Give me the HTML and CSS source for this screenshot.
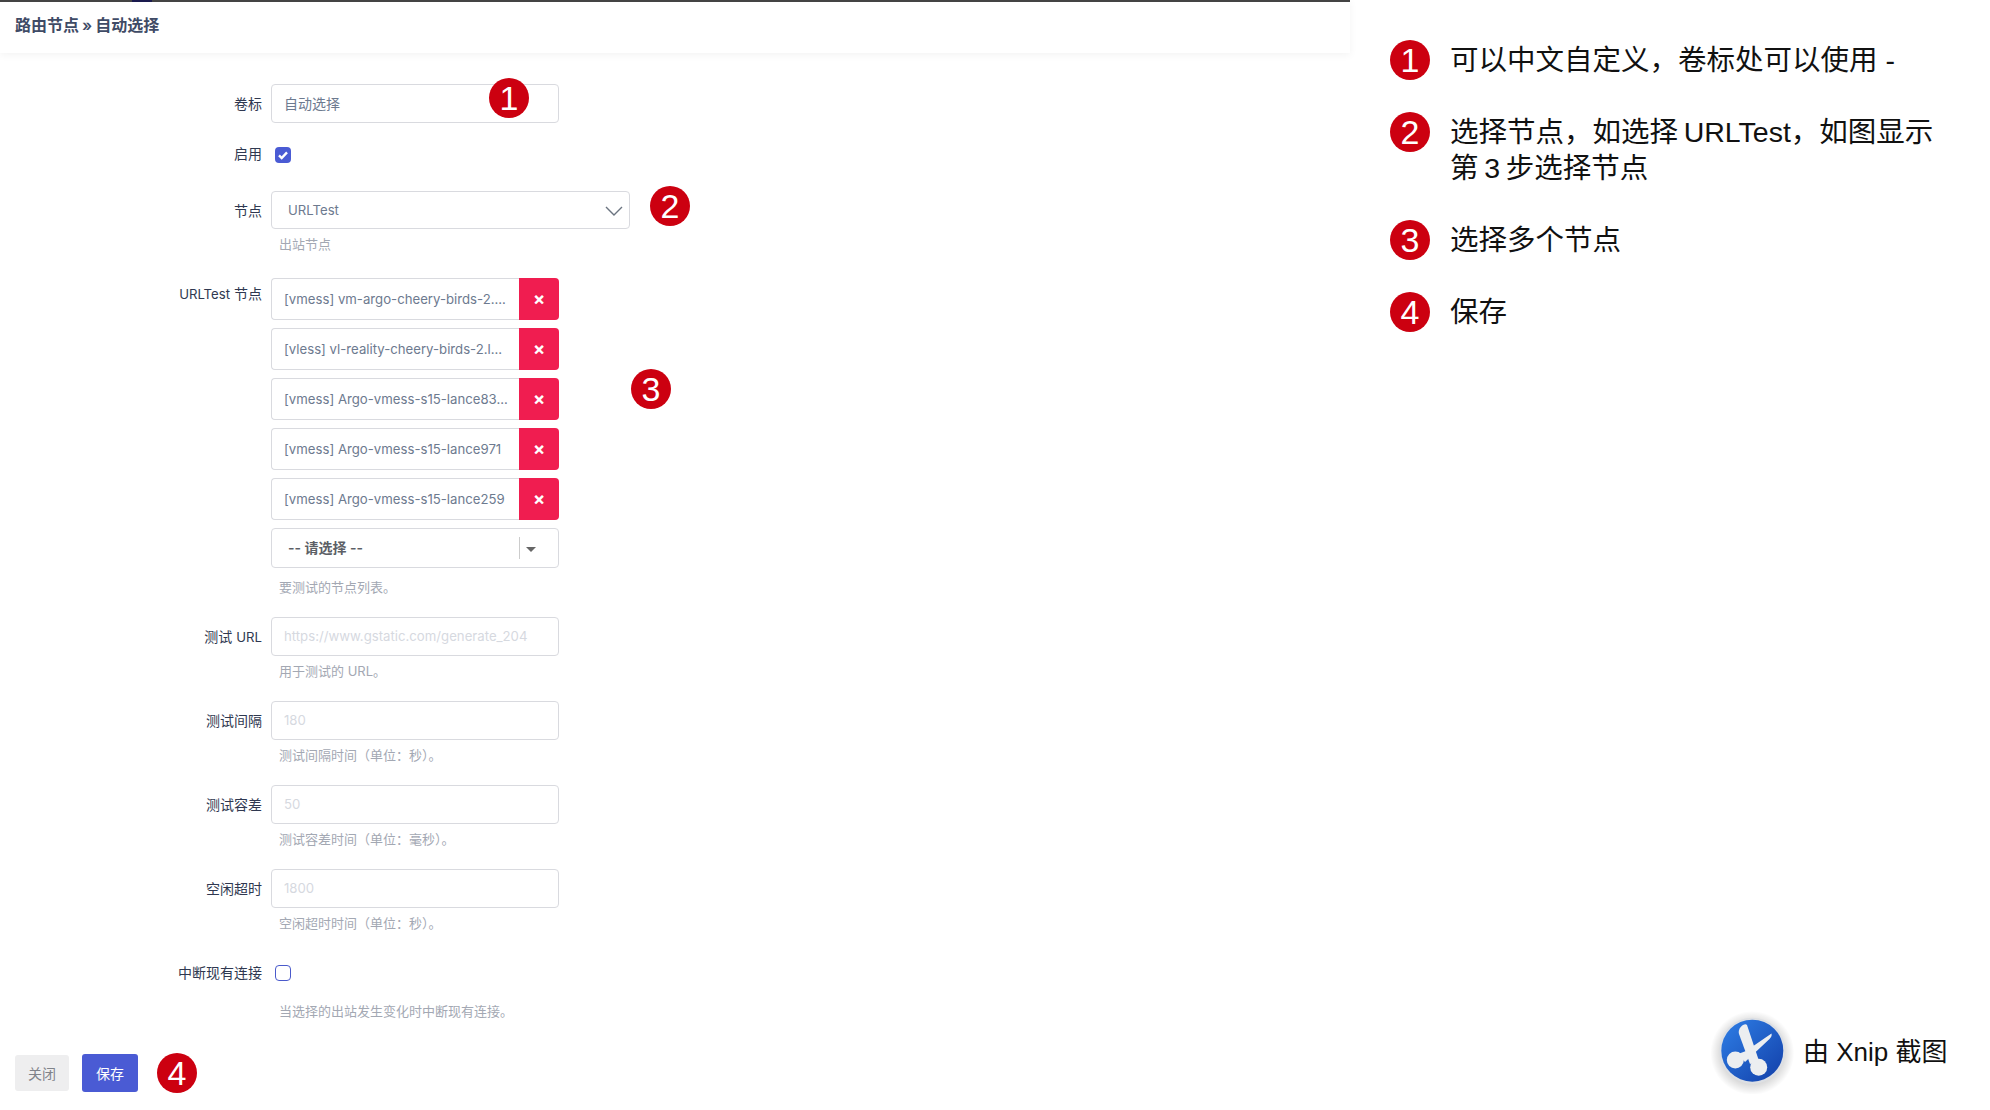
FILE: index.html
```html
<!DOCTYPE html>
<html lang="zh-CN">
<head>
  <meta charset="UTF-8">
  <title>路由节点 » 自动选择</title>
  <link rel="stylesheet" href="styles.css">
</head>
<body>
  <main class="panel">
    <header class="panel-head">
      <span class="top-mark"></span>
      <h1>路由节点 » 自动选择</h1>
    </header>

    <form class="form">
      <div class="row row-title">
        <div class="label">卷标</div>
        <div class="control">
          <div class="field value">自动选择</div>
          <span class="badge badge-1">1</span>
        </div>
      </div>

      <div class="row row-enable">
        <div class="label">启用</div>
        <div class="control">
          <span class="check check-on">
            <svg viewBox="0 0 16 16" width="16" height="16"><path d="M4 8.4l2.700 2.600L12 5.400" fill="none" stroke="#fff" stroke-width="2.400"/></svg>
          </span>
        </div>
      </div>

      <div class="row row-outbound">
        <div class="label">节点</div>
        <div class="control">
          <div class="field field-wide value">
            <span class="lat">URLTest</span>
            <svg class="chevron" viewBox="0 0 18 10" width="18" height="10"><path d="M1 1l8 8 8-8" fill="none" stroke="#6b7480" stroke-width="1.400"/></svg>
          </div>
          <span class="badge badge-2">2</span>
          <div class="hint hint-near">出站节点</div>
        </div>
      </div>

      <div class="row">
        <div class="label label-top"><span class="lat">URLTest</span> 节点</div>
        <div class="control">
          <div class="node-list">
            <div class="node"><div class="node-name">[vmess] vm-argo-cheery-birds-2....</div><div class="node-del">×</div></div>
            <div class="node"><div class="node-name">[vless] vl-reality-cheery-birds-2.l...</div><div class="node-del">×</div></div>
            <div class="node"><div class="node-name">[vmess] Argo-vmess-s15-lance83...</div><div class="node-del">×</div></div>
            <div class="node"><div class="node-name">[vmess] Argo-vmess-s15-lance971</div><div class="node-del">×</div></div>
            <div class="node"><div class="node-name">[vmess] Argo-vmess-s15-lance259</div><div class="node-del">×</div></div>
            <div class="multi-select">
              <span class="multi-text">-- 请选择 --</span>
              <span class="multi-arrow"></span>
            </div>
            <span class="badge badge-3">3</span>
          </div>
          <div class="hint hint-list">要测试的节点列表。</div>
        </div>
      </div>

      <div class="row">
        <div class="label">测试 <span class="lat">URL</span></div>
        <div class="control">
          <div class="field placeholder lat">https://www.gstatic.com/generate_204</div>
          <div class="hint">用于测试的 URL。</div>
        </div>
      </div>

      <div class="row">
        <div class="label">测试间隔</div>
        <div class="control">
          <div class="field placeholder lat">180</div>
          <div class="hint">测试间隔时间（单位：秒）。</div>
        </div>
      </div>

      <div class="row">
        <div class="label">测试容差</div>
        <div class="control">
          <div class="field placeholder lat">50</div>
          <div class="hint">测试容差时间（单位：毫秒）。</div>
        </div>
      </div>

      <div class="row row-idle">
        <div class="label">空闲超时</div>
        <div class="control">
          <div class="field placeholder lat">1800</div>
          <div class="hint">空闲超时时间（单位：秒）。</div>
        </div>
      </div>

      <div class="row row-interrupt">
        <div class="label">中断现有连接</div>
        <div class="control">
          <span class="check"></span>
          <div class="hint hint-far">当选择的出站发生变化时中断现有连接。</div>
        </div>
      </div>

      <div class="actions">
        <button type="button" class="btn btn-close">关闭</button>
        <button type="button" class="btn btn-save">保存</button>
        <span class="badge">4</span>
      </div>
    </form>
  </main>

  <aside class="notes">
    <div class="note"><span class="badge">1</span><p>可以中文自定义，卷标处可以使用 -</p></div>
    <div class="note"><span class="badge">2</span><p>选择节点，如选择&#8201;URLTest，如图显示第&#8201;3&#8201;步选择节点</p></div>
    <div class="note"><span class="badge">3</span><p>选择多个节点</p></div>
    <div class="note"><span class="badge">4</span><p>保存</p></div>

    <div class="xnip">
      <svg class="xnip-logo" viewBox="0 0 90 84" width="90" height="84">
        <defs>
          <linearGradient id="xnipBlue" x1="0" y1="0" x2="1" y2="1">
            <stop offset="0" stop-color="#2f7fe6"/>
            <stop offset="1" stop-color="#123fa8"/>
          </linearGradient>
          <radialGradient id="xnipGlow">
            <stop offset="0.75" stop-color="#000" stop-opacity="0.14"/>
            <stop offset="1" stop-color="#000" stop-opacity="0"/>
          </radialGradient>
        </defs>
        <circle cx="44.300" cy="43" r="42" fill="url(#xnipGlow)"/>
        <circle cx="44.300" cy="40.700" r="33" fill="#dcdfe4"/>
        <circle cx="44.300" cy="40.700" r="31" fill="url(#xnipBlue)"/>
        <g fill="#eceef0">
          <circle cx="27.300" cy="50" r="8.500"/>
          <circle cx="50.700" cy="57.300" r="8.500"/>
          <path d="M35 15c2-1 3-1 4 0l12 36-9 3-11-30c-1-4 1-7 4-9z"/>
          <path d="M63.500 23.500c0.500 2 0 3.500-2 5.500L37 52l-7-8 8-3z"/>
        </g>
      </svg>
      <span>由 Xnip 截图</span>
    </div>
  </aside>
</body>
</html>
```

FILE: styles.css
```css
* {
  box-sizing: border-box;
}
body {
  margin: 0;
  display: flex;
  min-height: 100vh;
  background: #fff;
  font-family: Inter, "Noto Sans CJK SC", sans-serif;
  font-size: 14px;
  color: #2f3850;
}
/* Inter runs wide, latin text in the reference is narrower */
.lat {
  font-size: 13.200px;
}

/* left: the form screenshot */
.panel {
  width: 1350px;
  flex: none;
}
.panel-head {
  position: relative;
  height: 53px;
  padding: 0 15px 7px;
  display: flex;
  align-items: center;
  border-top: 2px solid #444;
  box-shadow: 0 2px 8px rgba(0, 0, 0, 0.05);
}
.panel-head h1 {
  margin: 0;
  font-size: 16px;
  font-weight: 600;
  word-spacing: -1px;
  color: #3f4b66;
}
.top-mark {
  position: absolute;
  top: -2px;
  left: 132px;
  width: 20px;
  height: 2px;
  background: #1a1a4e;
}
.form {
  padding-top: 31px;
}
.row {
  display: grid;
  grid-template-columns: 262px 288px;
  column-gap: 9px;
  margin-bottom: 21px;
}
.row-title {
  margin-bottom: 21px;
}
.row-enable {
  margin-bottom: 25px;
}
.row-outbound {
  margin-bottom: 25px;
}
.row-idle {
  margin-bottom: 30px;
}
.label {
  text-align: right;
  line-height: 39px;
  color: #2f3850;
}
.label-top {
  line-height: 31px;
}
.row-enable .label {
  line-height: 20px;
}
.row-interrupt .label {
  line-height: 22px;
}
.control {
  position: relative;
}
.field {
  position: relative;
  height: 39px;
  padding: 0 12px;
  line-height: 37px;
  border: 1px solid #d9dadf;
  border-radius: 4px;
  background: #fff;
  white-space: nowrap;
}
.field-wide {
  height: 38px;
  width: 359px;
  padding-left: 16px;
  line-height: 36px;
}
.value {
  color: #6d7a8f;
}
.placeholder {
  color: #d6d9df;
}
.chevron {
  position: absolute;
  top: 14px;
  right: 6px;
}
.hint {
  margin-top: 6px;
  padding-left: 8px;
  font-size: 13px;
  line-height: 18px;
  color: #a3a8b3;
  white-space: nowrap;
}
.hint-list {
  margin-top: 10px;
}
.hint-far {
  margin-top: 21px;
}
.check {
  display: block;
  width: 16px;
  height: 16px;
  margin: 3px 0 3px 4px;
  border: 1px solid #4a5acb;
  border-radius: 4px;
  background: #fff;
}
.check-on {
  background: #4a5bd4;
  border: 0;
}
.check-on svg {
  display: block;
}

/* node rows */
.node-list {
  position: relative;
}
.node {
  display: flex;
  height: 42px;
  margin-bottom: 8px;
}
.node-name {
  flex: 1;
  min-width: 0;
  padding-left: 12px;
  font-size: 13.200px;
  line-height: 40px;
  color: #6d7a8f;
  white-space: nowrap;
  border: 1px solid #d9dadf;
  border-right: 0;
  border-radius: 4px 0 0 4px;
}
.node-del {
  flex: none;
  width: 40px;
  text-align: center;
  line-height: 42px;
  font-size: 18px;
  font-weight: 700;
  color: #fff;
  background: #f01d50;
  border-radius: 0 4px 4px 0;
}
.multi-select {
  display: flex;
  align-items: center;
  height: 40px;
  padding: 0 0 2px 16px;
  border: 1px solid #d9dadf;
  border-radius: 4px;
  position: relative;
}
.multi-text {
  font-weight: 600;
  color: #5c5f66;
}
.multi-arrow {
  position: absolute;
  top: 8px;
  left: 247px;
  height: 22px;
  border-left: 1px solid #ccc;
}
.multi-arrow::after {
  content: "";
  position: absolute;
  top: 10px;
  left: 6px;
  border: 5px solid transparent;
  border-top: 5px solid #666;
  border-bottom: 0;
}
.actions {
  display: flex;
  align-items: center;
  padding-left: 15px;
  margin-top: 33px;
}
.btn {
  font: inherit;
  border: 0;
  border-radius: 3px;
}
.btn-close {
  width: 54px;
  height: 36px;
  margin-right: 13px;
  color: #80838a;
  background: #eeeeef;
}
.btn-save {
  width: 56px;
  height: 38px;
  margin-right: 19px;
  color: #fff;
  background: #4a5bd4;
}

/* red numbered markers */
.badge {
  flex: none;
  width: 40px;
  height: 40px;
  border-radius: 50%;
  background: #cc0010;
  color: #fff;
  font-family: "Liberation Sans", sans-serif;
  font-size: 34px;
  line-height: 40px;
  text-align: center;
}
.badge-1 {
  position: absolute;
  top: -6px;
  left: 218px;
}
.badge-2 {
  position: absolute;
  top: -5px;
  left: 379px;
}
.badge-3 {
  position: absolute;
  top: 91px;
  left: 360px;
}

/* right: the notes */
.notes {
  flex: 1;
  display: flex;
  flex-direction: column;
  padding: 40px 0 26px 40px;
  font-family: "Liberation Sans", "Noto Sans CJK SC", sans-serif;
  color: #111;
}
.note {
  display: flex;
  gap: 20px;
  margin-bottom: 32px;
}
.note p {
  margin: 0;
  max-width: 492px;
  padding: 2px 0 2px;
  font-size: 28.500px;
  line-height: 36px;
}
.xnip {
  margin-top: auto;
  margin-left: 318px;
  display: flex;
  align-items: center;
  gap: 5px;
  font-size: 26px;
  color: #111;
}
.xnip-logo {
  margin: -4px 0 -10px 0;
}
```
